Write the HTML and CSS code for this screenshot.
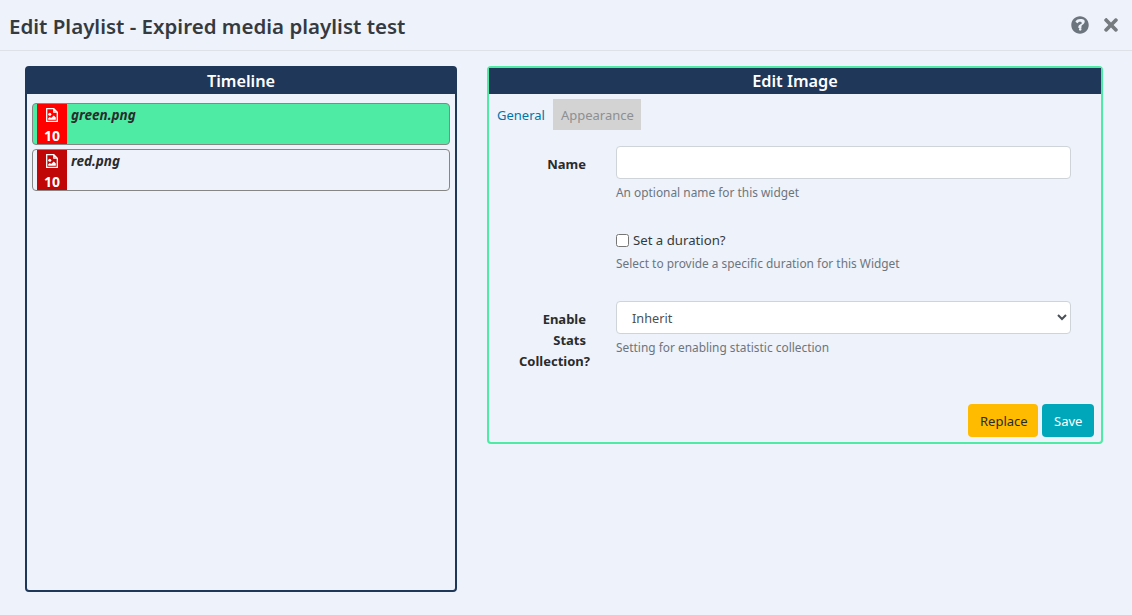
FILE: index.html
```html
<!DOCTYPE html>
<html lang="en">
<head>
<meta charset="utf-8">
<title>Edit Playlist</title>
<link rel="stylesheet" href="styles.css">
</head>
<body>
<header class="top">
  <h1 class="title">Edit Playlist - Expired media playlist test</h1>
  <div class="top-icons">
    <svg class="ico-help" viewBox="0 0 512 512"><path fill-rule="evenodd" d="M256 8C119 8 8 119 8 256s111 248 248 248 248-111 248-248S393 8 256 8zm6 332a38 38 0 1 0 0 76 38 38 0 0 0 0-76zm36-46v-6c0-16 11-25 30-38 30-20 62-46 62-92 0-62-62-70-132-70-58 0-96 22-126 64-5 7-4 17 3 22l36 27c7 5 17 4 22-3 19-24 32-38 62-38 23 0 52 15 52 37 0 17-14 26-37 39-27 15-62 34-62 81v9c0 9 7 16 16 16h58c9 0 16-7 16-16z"/></svg>
    <svg class="ico-close" viewBox="0 0 352 512"><path d="M242.7 256l100-100c12.300-12.300 12.300-32.200 0-44.500l-22.200-22.200c-12.300-12.300-32.200-12.300-44.500 0L176 189.300 76 89.200c-12.300-12.300-32.200-12.300-44.500 0L9.200 111.500c-12.300 12.300-12.300 32.200 0 44.500l100 100-100 100c-12.300 12.300-12.300 32.200 0 44.500l22.300 22.200c12.300 12.300 32.200 12.300 44.500 0l100-100 100 100c12.300 12.300 32.200 12.300 44.500 0l22.200-22.200c12.300-12.300 12.300-32.200 0-44.500L242.700 256z"/></svg>
  </div>
</header>
<main class="content">
  <section class="timeline">
    <h2 class="panel-head">Timeline</h2>
    <div class="timeline-list">
      <div class="widget widget-green">
        <div class="widget-side side-red">
          <svg class="ico-file" viewBox="0 0 12 14"><path class="file-line" d="M.7.7h7.100l3.500 3.500v9.100H.7zM7.800.7v3.500h3.500"/><circle class="file-fill" cx="3.800" cy="6.200" r="1.500"/><path class="file-fill" d="M2.200 11.800v-1.500l1.600-1.300 1.300 1 2.700-2.600 2 2.100v2.300z"/></svg>
          <span class="widget-num">10</span>
        </div>
        <span class="widget-name">green.png</span>
      </div>
      <div class="widget">
        <div class="widget-side side-dark">
          <svg class="ico-file" viewBox="0 0 12 14"><path class="file-line" d="M.7.7h7.100l3.500 3.500v9.100H.7zM7.800.7v3.500h3.500"/><circle class="file-fill" cx="3.800" cy="6.200" r="1.500"/><path class="file-fill" d="M2.200 11.800v-1.500l1.600-1.300 1.300 1 2.700-2.600 2 2.100v2.300z"/></svg>
          <span class="widget-num">10</span>
        </div>
        <span class="widget-name">red.png</span>
      </div>
    </div>
  </section>
  <section class="editor">
    <h2 class="panel-head">Edit Image</h2>
    <nav class="tabs">
      <a class="tab tab-active">General</a>
      <a class="tab tab-muted">Appearance</a>
    </nav>
    <form class="form">
      <div class="row row-name">
        <label class="row-label">Name</label>
        <div class="row-field">
          <input class="control" type="text">
          <small class="hint">An optional name for this widget</small>
        </div>
      </div>
      <div class="row row-duration">
        <div class="row-label"></div>
        <div class="row-field">
          <label class="check"><input class="check-box" type="checkbox"><span>Set a duration?</span></label>
          <small class="hint">Select to provide a specific duration for this Widget</small>
        </div>
      </div>
      <div class="row row-stats">
        <label class="row-label">Enable Stats Collection?</label>
        <div class="row-field">
          <select class="control control-select"><option>Inherit</option></select>
          <small class="hint">Setting for enabling statistic collection</small>
        </div>
      </div>
    </form>
    <div class="actions">
      <button class="btn btn-replace" type="button">Replace</button>
      <button class="btn btn-save" type="button">Save</button>
    </div>
  </section>
</main>
</body>
</html>
```
FILE: styles.css
```css
* { box-sizing: border-box; }
html, body { margin: 0; height: 100%; }
body {
  background: #eef2fa;
  color: #292b2c;
  font-family: "Noto Sans", "Open Sans", sans-serif;
  font-size: 13px;
  overflow: hidden;
}
.top {
  height: 51px;
  border-bottom: 1px solid #dee2e6;
  display: flex;
  align-items: center;
  justify-content: space-between;
  padding: 0 14px 0 9px;
}
.title {
  margin: 0;
  font-size: 20.5px;
  font-weight: 600;
  color: #343a40;
  line-height: 30px;
  padding-top: 1px;
}
.top-icons { display: flex; align-items: center; gap: 15px; }
.ico-help { width: 18px; height: 18px; fill: #6c757d; }
.ico-close { width: 14px; height: 20px; fill: #767b80; }
.content {
  display: flex;
  align-items: flex-start;
  gap: 30px;
  padding: 15px 0 0 25px;
}
.panel-head {
  margin: 0;
  height: 26px;
  background: #1f3759;
  color: #fff;
  text-align: center;
  font-size: 16.300px;
  font-weight: 600;
  line-height: 26px;
}
.timeline {
  width: 432px;
  height: 526px;
  border: 2px solid #1f3759;
  border-radius: 4px;
}
.timeline-list {
  padding: 9px 5px 0;
  display: flex;
  flex-direction: column;
  gap: 4px;
}
.widget {
  height: 42px;
  display: flex;
  border: 1px solid #868686;
  border-radius: 4px;
  padding-left: 4px;
  overflow: hidden;
}
.widget-green { background: #4eeba4; }
.widget-side {
  width: 30px;
  display: flex;
  flex-direction: column;
  align-items: center;
  color: #fff;
  padding-top: 4px;
}
.side-red { background: #ff0000; }
.side-dark { background: #c00606; }
.ico-file { width: 12px; height: 14px; }
.file-line { fill: none; stroke: #fff; stroke-width: 1.300; }
.file-fill { fill: #fff; }
.widget-num { font-size: 14px; font-weight: 700; line-height: 17px; margin-top: auto; }
.widget-name {
  font-size: 13.500px;
  font-weight: 700;
  font-style: italic;
  color: #292b2c;
  padding: 2px 0 0 4px;
  line-height: 18px;
}
.editor {
  width: 616px;
  height: 378px;
  border: 2px solid #4eeba4;
  border-radius: 4px;
  position: relative;
}
.tabs { display: flex; padding: 5px 0 0 1px; }
.tab { height: 31px; padding: 1px 8px 0 7px; line-height: 31px; font-size: 13px; }
.tab-active { color: #0275a8; }
.tab-muted { background: #d3d3d3; color: #8d8f91; padding: 1px 7px 0 8px; }
.form { padding-top: 16px; }
.row { display: flex; }
.row-label {
  width: 67px;
  flex: none;
  text-align: right;
  font-weight: 700;
  line-height: 21px;
  margin: 0 30px;
}
.row-name .row-label { padding-top: 8px; }
.row-field { width: 455px; display: flex; flex-direction: column; }
.control {
  width: 455px;
  height: 33px;
  border: 1px solid #ced4da;
  border-radius: 4px;
  background: #fff;
  color: #495057;
  font: 13px "Noto Sans", "Open Sans", sans-serif;
  padding: 0 12px;
}
.control-select { padding-left: 11px; font-size: 12.700px; }
.hint { display: block; flex: none; font-size: 11.900px; line-height: 18px; color: #6c757d; margin-top: 4px; }
.row-duration { margin-top: 29px; }
.check { display: flex; align-items: center; height: 20px; font-size: 13.200px; color: #343a40; }
.check-box { width: 13px; height: 13px; margin: 0 4px 0 0; }
.row-stats { margin-top: 29px; }
.row-stats .row-label { padding-top: 8px; }
.actions {
  position: absolute;
  right: 7px;
  bottom: 5px;
  display: flex;
  gap: 4px;
}
.btn {
  height: 33px;
  border: 0;
  border-radius: 4px;
  font: 13px "Noto Sans", "Open Sans", sans-serif;
  padding: 0 12px;
}
.btn-replace { background: #ffbb00; color: #292b2c; width: 70px; }
.btn-save { background: #00a7bb; color: #fff; width: 52px; }
```
